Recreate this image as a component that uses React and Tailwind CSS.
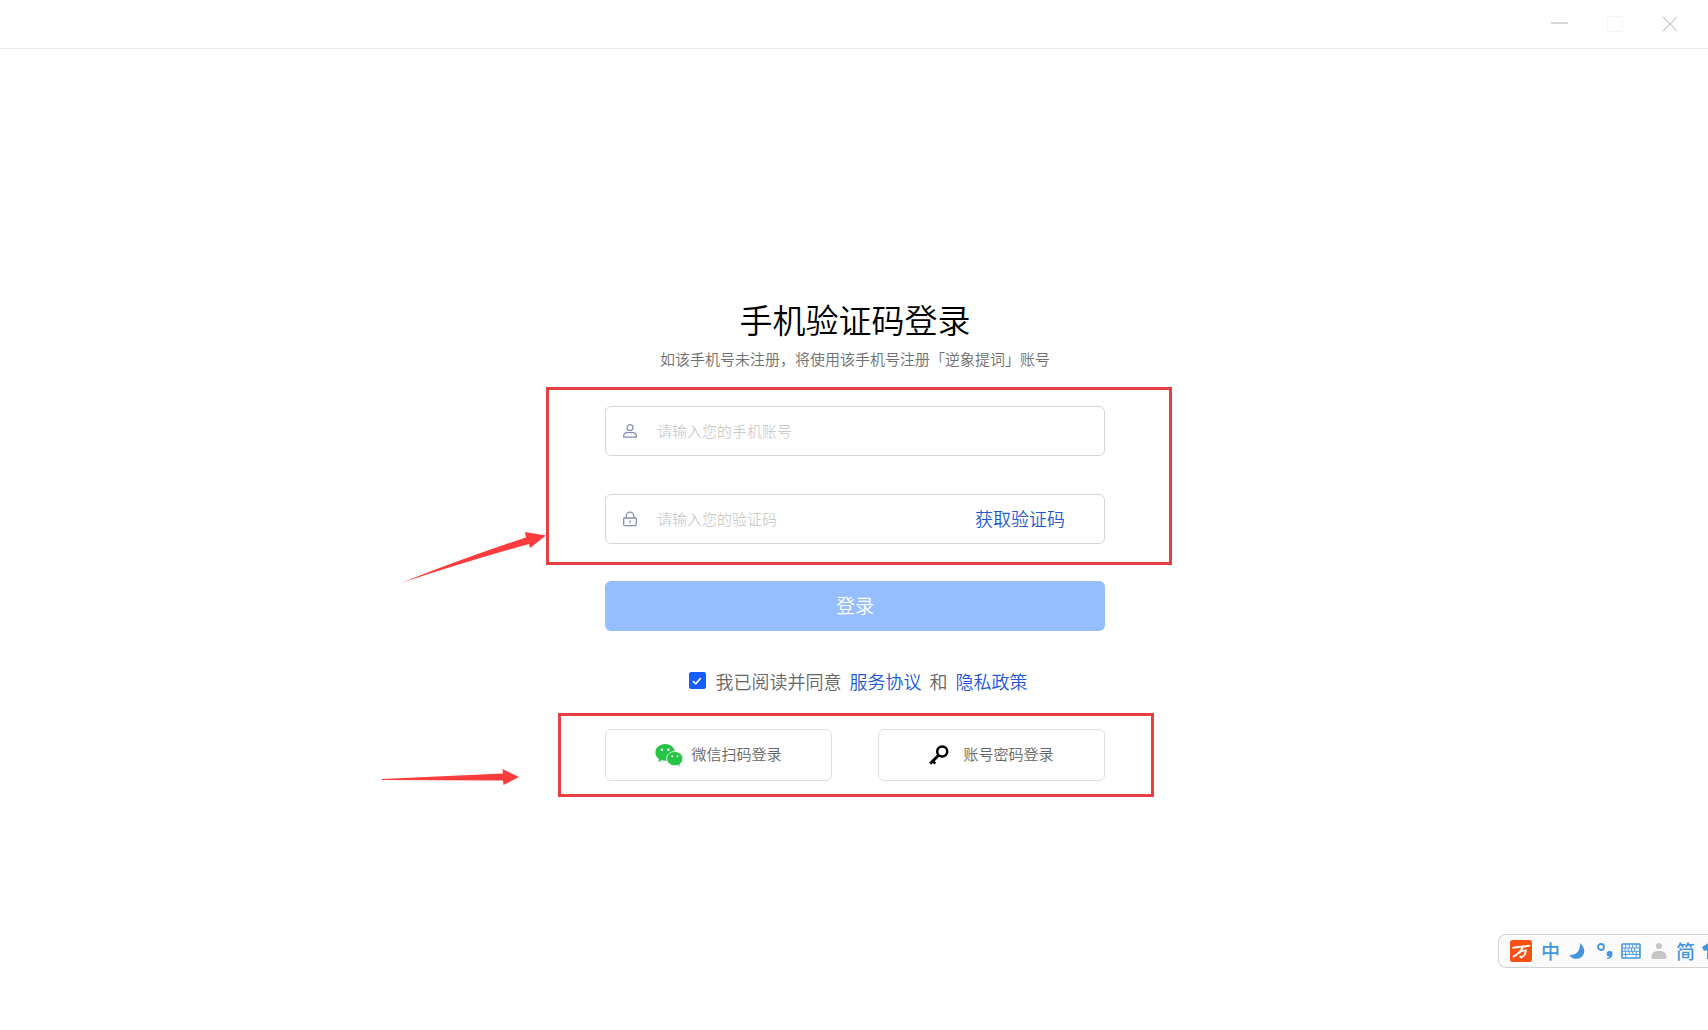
import React from "react";

function WindowControls() {
  return (
    <div className="flex items-center gap-[39px] pr-[30px] text-[#cfcfcf]">
      <button type="button" aria-label="最小化" className="h-4 w-4">
        <svg viewBox="0 0 16 16" className="h-4 w-4 overflow-visible" fill="none" stroke="currentColor" strokeWidth="1.6">
          <path d="M-1 7H16" />
        </svg>
      </button>
      <button type="button" aria-label="最大化" className="h-4 w-4 text-[#f4f4f4]">
        <svg viewBox="0 0 16 16" className="h-4 w-4" fill="none" stroke="currentColor">
          <rect x="0.5" y="0.5" width="15" height="15" rx="1" />
        </svg>
      </button>
      <button type="button" aria-label="关闭" className="h-4 w-4">
        <svg viewBox="0 0 16 16" className="h-4 w-4" fill="none" stroke="currentColor" strokeWidth="1.4">
          <path d="M1 1L15 15M15 1L1 15" />
        </svg>
      </button>
    </div>
  );
}

function UserIcon() {
  return (
    <svg viewBox="0 0 16 16" className="h-4 w-4 shrink-0" fill="none" stroke="#8791ad" strokeWidth="1.3" aria-hidden="true">
      <circle cx="8" cy="4.6" r="3" />
      <path d="M1.7 14.2v-1.400c0-1.900 1.500-3.200 3.500-3.200h5.600c2 0 3.500 1.300 3.500 3.200v1.400z" strokeLinejoin="round" />
    </svg>
  );
}

function LockIcon() {
  return (
    <svg viewBox="0 0 16 16" className="h-4 w-4 shrink-0" fill="none" stroke="#8791ad" strokeWidth="1.3" aria-hidden="true">
      <rect x="1.7" y="7" width="12.6" height="7.6" rx="0.8" />
      <path d="M4.3 7V4.8a3.7 3.7 0 0 1 7.4 0V7M8 9.4v2.8" />
    </svg>
  );
}

function WechatIcon() {
  return (
    <svg viewBox="0 0 28 24" className="h-6 w-7" aria-hidden="true">
      <path fill="#28c445" d="M10.2 1C4.700 1 .4 4.600.4 9.500c0 2.800 1.400 5 3.700 6.500L3.200 19l3.600-1.700c1.100.3 2.200.5 3.400.5 5.400 0 9.800-3.600 9.800-8.300S15.600 1 10.200 1z" />
      <path fill="#28c445" stroke="#fff" strokeWidth="0.8" d="M19.700 8.500c-4.500 0-8 3.100-8 7.100s3.500 7.100 8 7.100c1 0 1.900-.1 2.800-.4l3 1.600-.8-2.700c1.900-1.300 3.100-3.300 3.100-5.600 0-4-3.600-7.100-8.100-7.100z" />
      <g fill="#fff">
        <circle cx="6.900" cy="6.800" r="1.200" />
        <circle cx="13.400" cy="6.800" r="1.200" />
        <circle cx="17.200" cy="13.200" r="1" />
        <circle cx="22.500" cy="13.200" r="1" />
      </g>
    </svg>
  );
}

function KeyIcon() {
  return (
    <svg viewBox="0 0 20 20" className="h-5 w-5" fill="none" stroke="#000" aria-hidden="true">
      <circle cx="13.200" cy="6.500" r="5" strokeWidth="2.500" />
      <path d="M9.600 10.200L1.200 18.600" strokeWidth="2.900" />
      <path d="M3.200 15.400l3 3.200" strokeWidth="2.400" />
    </svg>
  );
}

function Highlight({ className }) {
  return <div aria-hidden="true" className={`pointer-events-none absolute border-[3px] border-[#e64043] ${className}`} />;
}

const field =
  "flex h-[50px] items-center rounded-md border border-[#d6d6d8] bg-white pl-4";
const input =
  "ml-[19px] h-full min-w-0 flex-1 bg-transparent text-[15px] font-light text-[#333] outline-none placeholder:text-[#c2c2c2]";
const alternative =
  "flex h-[52px] w-[227px] items-center justify-center rounded-md border border-[#dfdfe1] text-[15px] font-[350] text-[#666]";

function ImeBar() {
  return (
    <aside className="absolute right-0 bottom-[62px] flex h-[34px] w-[210px] items-center overflow-hidden rounded-l-lg border border-r-0 border-[#d2d2d2] bg-[#fbfbfb] pl-[11px] text-[19px] leading-6 font-medium text-[#4395df]">
      <svg viewBox="0 0 22 22" className="h-[22px] w-[22px] shrink-0" aria-hidden="true">
        <rect width="22" height="22" rx="2.500" fill="#fa5014" />
        <g fill="none" stroke="#fff" strokeWidth="1.900" strokeLinecap="round" strokeLinejoin="round">
          <path d="M3 7.800C8 6.600 13 7 19.500 5.600" />
          <path d="M3.500 16.500C7.500 14.500 10.500 11.800 12.500 7.600" />
          <path d="M8.500 13c2.500-1.800 5-3 7.500-2.500-.2 2.800-1.600 5-4.600 7l-1.200-1" />
        </g>
      </svg>
      <span className="ml-[9px] w-5 shrink-0">中</span>
      <svg viewBox="0 0 16 16" className="ml-2 h-4 w-4 shrink-0" fill="currentColor" aria-hidden="true">
        <path d="M11 0c6 5 5.200 11.300.8 14.400C8 17 3.200 16 .2 11.900 7 12.500 11.500 8 11 0z" />
      </svg>
      <svg viewBox="0 0 16 16" className="ml-3 h-4 w-4 shrink-0" aria-hidden="true">
        <circle cx="4" cy="4" r="3" fill="none" stroke="currentColor" strokeWidth="1.800" />
        <path fill="currentColor" d="M12.400 8a3 3 0 0 1 3.100 3.200c0 2.800-2.500 4.600-5.300 4.800l-.3-1.200c1.500-.3 2.200-.8 2.400-1.400a2.700 2.700 0 1 1 .1-5.400z" />
      </svg>
      <svg viewBox="0 0 20 16" className="ml-2 h-4 w-5 shrink-0" fill="none" stroke="currentColor" strokeWidth="1.600" aria-hidden="true">
        <rect x="1" y="1" width="18" height="14" rx="0.800" />
        <path strokeWidth="0.900" d="M1 5h18M1 8.300h18M1 11.500h18M4.700 1v4M8.200 1v4M11.700 1v4M15.200 1v4M4 5v3.300M7.200 5v3.300M10.400 5v3.300M13.600 5v3.300M4.700 8.300v6.200M8.200 8.300v3M11.700 8.300v3M15.200 8.300v6.200" />
      </svg>
      <svg viewBox="0 0 16 16" className="ml-[10px] h-4 w-4 shrink-0" fill="#c6c6c6" aria-hidden="true">
        <circle cx="8" cy="3" r="3" />
        <path d="M.7 16v-3.500C.7 9.800 3.500 8 8 8s7.300 1.800 7.300 4.500V16z" />
      </svg>
      <span className="ml-[9px] w-5 shrink-0">简</span>
      <svg viewBox="0 0 20 16" className="ml-[6px] h-4 w-5 shrink-0" fill="currentColor" aria-hidden="true">
        <path d="M6.500 0C8 2 12 2 13.500 0L20 4l-2 4-3-1v9H5V7L2 8 0 4z" />
      </svg>
    </aside>
  );
}

export default function App() {
  return (
    <div
      lang="zh-CN"
      className="relative flex min-h-screen flex-col overflow-hidden bg-white font-['Noto_Sans_CJK_SC',sans-serif]"
    >
      <header className="flex h-[49px] items-center justify-end border-b border-[#eeeeee]">
        <WindowControls />
      </header>

      <main className="flex flex-1 flex-col items-center justify-center pb-0.5 pl-0.5">
        <h1 className="text-[33px] leading-[44px] font-[350] text-black">手机验证码登录</h1>
        <p className="mt-[7px] text-[15px] leading-[22px] font-[350] text-[#707070]">
          如该手机号未注册，将使用该手机号注册「逆象提词」账号
        </p>

        <form className="mt-9 w-full max-w-[500px]" onSubmit={(e) => e.preventDefault()}>
          <div className="relative flex flex-col gap-[38px]">
            <label className={field}>
              <UserIcon />
              <input type="tel" aria-label="手机账号" placeholder="请输入您的手机账号" className={input} />
            </label>
            <div className={field}>
              <LockIcon />
              <input type="text" aria-label="验证码" placeholder="请输入您的验证码" className={input} />
              <button type="button" className="mr-[39px] pb-0.5 text-lg font-[350] text-[#2457d6]">
                获取验证码
              </button>
            </div>
            <Highlight className="-top-[19px] -right-[67px] -bottom-[21px] -left-[59px]" />
            <svg viewBox="0 0 146 52" className="pointer-events-none absolute top-[125px] -left-[204px] h-[52px] w-[146px]" aria-hidden="true">
              <path fill="#fa3c3c" d="M0 52Q60 28 125 6.500L124 1 145 4.500 129 17 128 13Q70 29 0 52z" />
            </svg>
          </div>

          <button type="submit" className="mt-[37px] h-[50px] w-full rounded-md bg-[#94beff] text-[19px] font-[350] text-white">
            登录
          </button>

          <div className="mt-[38px] flex h-6 items-center justify-center gap-2 pl-1.5 text-lg leading-6 font-[350] text-[#666]">
            <label className="flex items-center gap-[10px]">
              <span className="grid h-[17px] w-[17px] place-items-center">
                <input
                  type="checkbox"
                  defaultChecked
                  className="peer col-start-1 row-start-1 h-[17px] w-[17px] appearance-none rounded-xs border border-[#165dff] checked:bg-[#165dff]"
                />
                <svg viewBox="0 0 12 12" className="pointer-events-none col-start-1 row-start-1 hidden h-3 w-3 peer-checked:block" fill="none" stroke="#fff" strokeWidth="1.600" aria-hidden="true">
                  <path d="M2 6.200l2.800 2.600L9.800 3" />
                </svg>
              </span>
              我已阅读并同意
            </label>
            <a href="#terms" className="text-[#2457d6]">服务协议</a>
            <span>和</span>
            <a href="#privacy" className="text-[#2457d6]">隐私政策</a>
          </div>

          <div className="relative mt-9 flex justify-between">
            <button type="button" className={`${alternative} gap-2`}>
              <WechatIcon />
              微信扫码登录
            </button>
            <button type="button" className={`${alternative} gap-[14px]`}>
              <KeyIcon />
              账号密码登录
            </button>
            <Highlight className="-top-4 -right-[49px] -bottom-4 -left-[47px]" />
            <svg viewBox="0 0 138 18" className="pointer-events-none absolute top-[39px] -left-[223px] h-[18px] w-[138px]" aria-hidden="true">
              <path fill="#fa3c3c" d="M0 11L121 5.500 120.500 1 137 9 121.500 17 121 12.500 0 12z" />
            </svg>
          </div>
        </form>
      </main>

      <ImeBar />
    </div>
  );
}
